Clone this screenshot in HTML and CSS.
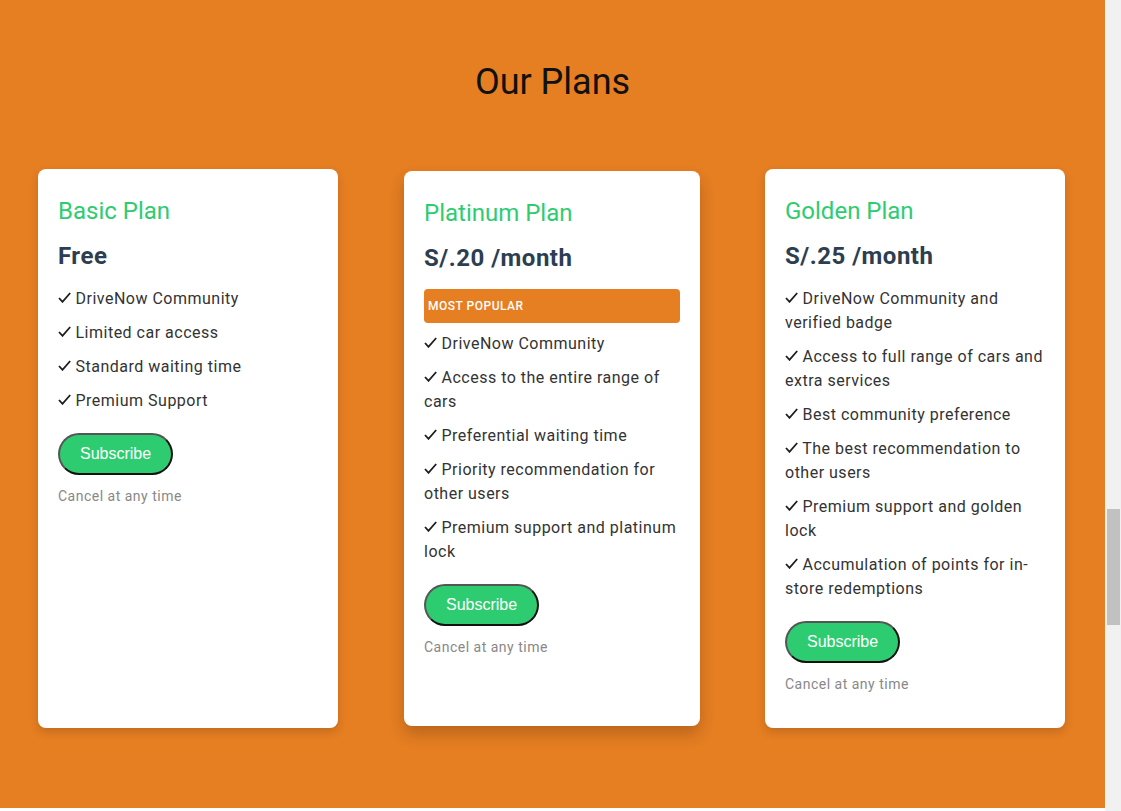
FILE: index.html
```html
<!DOCTYPE html>
<html lang="en">
<head>
  <meta charset="UTF-8">
  <title>Our Plans - DriveNow</title>
  <meta name="viewport" content="width=device-width, initial-scale=1.0">
  <link rel="stylesheet" href="styles.css">
</head>
<body>
  <div class="page">
    <section class="plans" aria-label="Plans">
      <h2 class="plans-title">Our Plans</h2>

      <div class="plans-row">
        <div class="plan">
          <h3 class="plan-name">Basic Plan</h3>
          <p class="plan-price">Free</p>
          <ul class="plan-features">
            <li><svg class="check" viewBox="0 0 13 11"><path d="M1 6 L4.5 9.8 L12.2 1"/></svg> DriveNow Community</li>
            <li><svg class="check" viewBox="0 0 13 11"><path d="M1 6 L4.5 9.8 L12.2 1"/></svg> Limited car access</li>
            <li><svg class="check" viewBox="0 0 13 11"><path d="M1 6 L4.5 9.8 L12.2 1"/></svg> Standard waiting time</li>
            <li><svg class="check" viewBox="0 0 13 11"><path d="M1 6 L4.5 9.8 L12.2 1"/></svg> Premium Support</li>
          </ul>
          <button class="subscribe" type="button">Subscribe</button>
          <p class="cancel">Cancel at any time</p>
        </div>

        <div class="plan plan-popular">
          <h3 class="plan-name">Platinum Plan</h3>
          <p class="plan-price">S/.20 /month</p>
          <div class="badge">Most Popular</div>
          <ul class="plan-features">
            <li><svg class="check" viewBox="0 0 13 11"><path d="M1 6 L4.5 9.8 L12.2 1"/></svg> DriveNow Community</li>
            <li><svg class="check" viewBox="0 0 13 11"><path d="M1 6 L4.5 9.8 L12.2 1"/></svg> Access to the entire range of cars</li>
            <li><svg class="check" viewBox="0 0 13 11"><path d="M1 6 L4.5 9.8 L12.2 1"/></svg> Preferential waiting time</li>
            <li><svg class="check" viewBox="0 0 13 11"><path d="M1 6 L4.5 9.8 L12.2 1"/></svg> Priority recommendation for other users</li>
            <li><svg class="check" viewBox="0 0 13 11"><path d="M1 6 L4.5 9.8 L12.2 1"/></svg> Premium support and platinum lock</li>
          </ul>
          <button class="subscribe" type="button">Subscribe</button>
          <p class="cancel">Cancel at any time</p>
        </div>

        <div class="plan">
          <h3 class="plan-name">Golden Plan</h3>
          <p class="plan-price">S/.25 /month</p>
          <ul class="plan-features">
            <li><svg class="check" viewBox="0 0 13 11"><path d="M1 6 L4.5 9.8 L12.2 1"/></svg> DriveNow Community and verified badge</li>
            <li><svg class="check" viewBox="0 0 13 11"><path d="M1 6 L4.5 9.8 L12.2 1"/></svg> Access to full range of cars and extra services</li>
            <li><svg class="check" viewBox="0 0 13 11"><path d="M1 6 L4.5 9.8 L12.2 1"/></svg> Best community preference</li>
            <li><svg class="check" viewBox="0 0 13 11"><path d="M1 6 L4.5 9.8 L12.2 1"/></svg> The best recommendation to other users</li>
            <li><svg class="check" viewBox="0 0 13 11"><path d="M1 6 L4.5 9.8 L12.2 1"/></svg> Premium support and golden lock</li>
            <li><svg class="check" viewBox="0 0 13 11"><path d="M1 6 L4.5 9.8 L12.2 1"/></svg> Accumulation of points for in-store redemptions</li>
          </ul>
          <button class="subscribe" type="button">Subscribe</button>
          <p class="cancel">Cancel at any time</p>
        </div>
      </div>
    </section>
  </div>

  <div class="scrollbar" aria-hidden="true">
    <div class="scrollbar-thumb"></div>
  </div>
</body>
</html>
```

FILE: styles.css
```css
/* Base */
*, *::before, *::after {
  box-sizing: border-box;
}
html, body {
  height: 100%;
}
body {
  margin: 0;
  display: flex;
  overflow: hidden;
  background: #fff;
  font-family: Roboto, 'Liberation Sans', Arial, sans-serif;
  color: #333;
}

.page {
  flex: 1;
  min-width: 0;
}

/* Scrollbar look-alike */
.scrollbar {
  width: 16px;
  flex-shrink: 0;
  background: #f1f1f1;
  border-left: 1px solid #f6f6f6;
}
.scrollbar-thumb {
  margin: 509px 1px 0 1px;
  height: 116px;
  background: #c1c1c1;
}

/* Plans section */
.plans {
  background-color: #e67e22;
  padding: 61px 0 80px 0;
}

.plans-title {
  margin: 0 0 66px 0;
  font-size: 36px;
  line-height: 42px;
  font-weight: 400;
  color: #111;
  text-align: center;
}

.plans-row {
  display: flex;
  justify-content: center;
  align-items: stretch;
  gap: 66px;
  padding-right: 2px;
}

/* Card */
.plan {
  width: 300px;
  background: #fff;
  border-radius: 8px;
  padding: 28px 20px 36px 20px;
  box-shadow: 0 4px 10px rgba(0, 0, 0, 0.15);
}

.plan-popular {
  width: 296px;
  margin: 2px -1px 2px 0;
  box-shadow: 0 8px 16px rgba(0, 0, 0, 0.2);
}

.plan-name {
  margin: 0 0 16px 0;
  font-size: 24px;
  line-height: 29px;
  font-weight: 400;
  color: #2ecc71;
}

.plan-price {
  margin: 0 0 17px 0;
  font-size: 24px;
  line-height: 28px;
  font-weight: 700;
  letter-spacing: 0.5px;
  color: #2c3e50;
}

/* Popular badge */
.badge {
  background-color: #e67e22;
  color: #fff;
  border-radius: 4px;
  padding: 10px 4px;
  font-size: 12px;
  line-height: 14px;
  font-weight: 500;
  letter-spacing: 0.5px;
  text-transform: uppercase;
  margin-bottom: 9px;
}

/* Feature list */
.plan-features {
  list-style: none;
  margin: 0 0 20px 0;
  padding: 0;
}

.plan-features li {
  font-size: 16px;
  line-height: 24px;
  letter-spacing: 0.5px;
  color: #333;
  margin-bottom: 10px;
}

.plan-features li:last-child {
  margin-bottom: 0;
}

.check {
  width: 13px;
  height: 11px;
  vertical-align: 1px;
  fill: none;
  stroke: #1c1c1c;
  stroke-width: 1.8;
  stroke-linejoin: miter;
}

/* Button */
.subscribe {
  display: block;
  background-color: #2ecc71;
  color: #fff;
  border: 2px solid;
  border-color: #555 #111 #111 #555;
  border-radius: 21px;
  padding: 10px 20px;
  font-family: 'Liberation Sans', Arial, sans-serif;
  font-size: 16px;
  line-height: 18px;
  cursor: pointer;
}

.cancel {
  margin: 13px 0 0 0;
  font-size: 14px;
  line-height: 16px;
  letter-spacing: 0.5px;
  color: #888;
}
```
